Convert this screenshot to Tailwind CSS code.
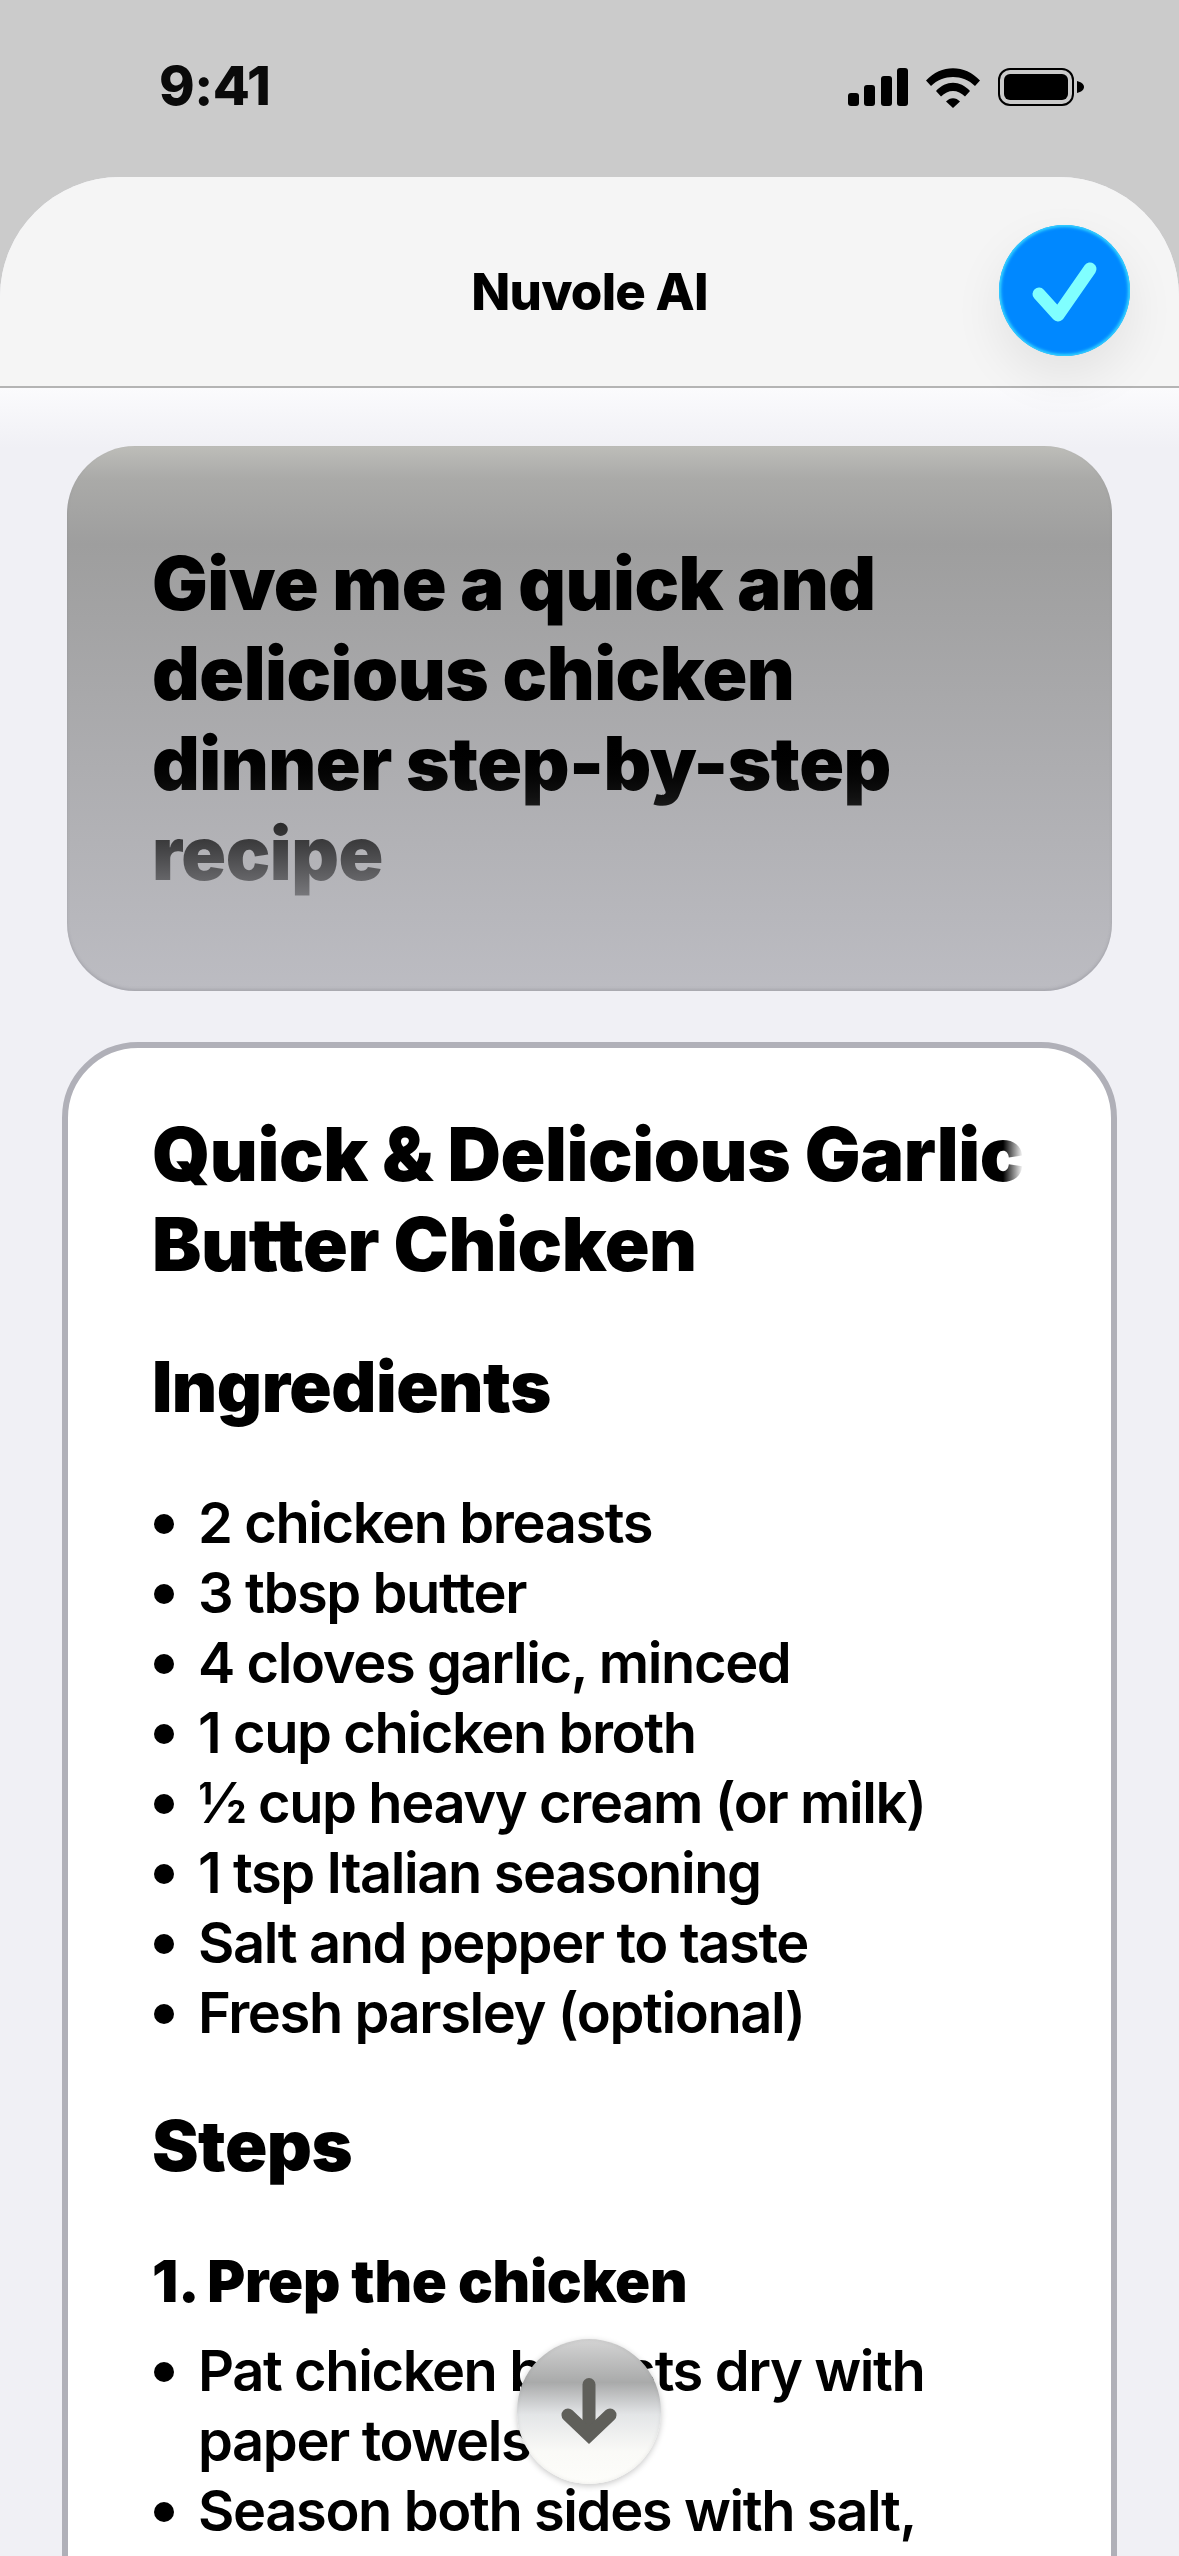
<!DOCTYPE html>
<html lang="en">
<head>
    <meta charset="UTF-8">
    <meta name="viewport" content="width=device-width, initial-scale=1.0">
    <title>Nuvole AI</title>
    <script src="https://cdn.jsdelivr.net/npm/@tailwindcss/browser@4"></script>
</head>
<body class="bg-[#cbcbcb] font-['Inter',sans-serif] text-black">
    <div class="relative w-[1179px] h-[2556px] overflow-hidden bg-[#cbcbcb]">
        <!-- status bar -->
        <div class="h-[177px] flex justify-between pl-[159px] pr-[95px] pt-[56px]">
            <span class="text-[54px] leading-[60px] font-extrabold tracking-[-0.5px] text-[#0a0a0a]">9:41</span>
            <div class="flex items-start gap-[18px] pt-[12px]">
                <svg class="w-[60px] h-[38px]" viewBox="0 0 60 38" fill="#000">
                    <rect x="0" y="25" width="11" height="13" rx="3"/>
                    <rect x="16" y="17" width="11" height="21" rx="3"/>
                    <rect x="33" y="8" width="11" height="30" rx="3"/>
                    <rect x="49" y="0" width="11" height="38" rx="3"/>
                </svg>
                <svg class="w-[54px] h-[40px]" viewBox="0 0 54 40" fill="#000">
                    <path d="M0 12.500C15 -4 39 -4 54 12.500L49 18C37 6 17 6 5 18Z"/>
                    <path d="M10 23C20 12 34 12 44 23L39 28.500C32 21 22 21 15 28.500Z"/>
                    <path d="M20 33.500C24 29 30 29 34 33.500L27 40Z"/>
                </svg>
                <svg class="w-[86px] h-[38px]" viewBox="0 0 86 38">
                    <rect x="1" y="1" width="74" height="36" rx="11" fill="none" stroke="#000" stroke-width="2"/>
                    <rect x="6" y="6" width="64" height="26" rx="6" fill="#000"/>
                    <path d="M79 13C83 14 86 16 86 19C86 22 83 24 79 25Z" fill="#000"/>
                </svg>
            </div>
        </div>

        <!-- sheet -->
        <div class="rounded-t-[120px] bg-[#f0f0f5] h-full overflow-hidden">
            <header class="relative h-[211px] flex items-center justify-center bg-[#f5f5f5] border-b-2 border-[#b4b4b4]">
                <h1 class="text-[51px] font-extrabold tracking-[-0.8px] leading-[60px] mt-[20px]">Nuvole AI</h1>
                <button class="absolute left-[999px] top-[48px] w-[131px] h-[131px] rounded-full bg-[#0088ff] flex items-center justify-center shadow-[0_20px_50px_rgba(0,0,0,0.08),inset_0_0_3px_2px_#35d6ff]">
                    <svg class="w-[131px] h-[131px]" viewBox="0 0 131 131" fill="none">
                        <path d="M40 69L59 90L91 44" stroke="#80ffff" stroke-width="13" stroke-linecap="round" stroke-linejoin="round"/>
                    </svg>
                </button>
            </header>

            <main class="bg-linear-to-b from-[#fbfbfd] to-[#f0f0f5] to-[60px] pt-[58px]">
                <!-- prompt bubble -->
                <section class="mx-[67px] h-[545px] rounded-[68px] pl-[85px] pt-[92px] bg-[linear-gradient(180deg,#bdbdb9_0%,#aaaaa8_6%,#9e9e9e_18%,#bcbcc2_100%)] shadow-[inset_0_-2px_3px_rgba(120,120,130,0.3)]">
                    <p class="w-[900px] text-[74px] leading-[90px] font-black tracking-[-0.5px] bg-linear-to-b from-black from-[55%] via-[#111] via-[72%] to-[#7a7a7e] bg-clip-text text-transparent">Give me a quick and<br>delicious chicken<br>dinner step-by-step<br>recipe</p>
                </section>

                <!-- response card -->
                <article class="relative mx-[62px] mt-[51px] h-[1600px] rounded-[76px] border-[6px] border-[#b0b0b8] bg-white pl-[84px] pt-[61px]">
                    <h2 class="w-[900px] text-[74px] leading-[90px] font-black tracking-[-0.4px]">Quick &amp; Delicious Garlic<br>Butter Chicken</h2>
                    <div class="absolute left-[935px] top-[60px] w-[40px] h-[90px] bg-linear-to-r from-white/0 to-white to-50%"></div>
                    <h3 class="mt-[58px] text-[70px] leading-[80px] font-black tracking-[-0.5px]">Ingredients</h3>
                    <ul class="mt-[61px] text-[56px] leading-[70px] font-semibold tracking-[-1.4px]">
                        <li class="flex"><span class="w-[20px] h-[20px] ml-[2px] mr-[24px] mt-[26px] shrink-0 rounded-full bg-black"></span>2 chicken breasts</li>
                        <li class="flex"><span class="w-[20px] h-[20px] ml-[2px] mr-[24px] mt-[26px] shrink-0 rounded-full bg-black"></span>3 tbsp butter</li>
                        <li class="flex"><span class="w-[20px] h-[20px] ml-[2px] mr-[24px] mt-[26px] shrink-0 rounded-full bg-black"></span>4 cloves garlic, minced</li>
                        <li class="flex"><span class="w-[20px] h-[20px] ml-[2px] mr-[24px] mt-[26px] shrink-0 rounded-full bg-black"></span>1 cup chicken broth</li>
                        <li class="flex"><span class="w-[20px] h-[20px] ml-[2px] mr-[24px] mt-[26px] shrink-0 rounded-full bg-black"></span>½ cup heavy cream (or milk)</li>
                        <li class="flex"><span class="w-[20px] h-[20px] ml-[2px] mr-[24px] mt-[26px] shrink-0 rounded-full bg-black"></span>1 tsp Italian seasoning</li>
                        <li class="flex"><span class="w-[20px] h-[20px] ml-[2px] mr-[24px] mt-[26px] shrink-0 rounded-full bg-black"></span>Salt and pepper to taste</li>
                        <li class="flex"><span class="w-[20px] h-[20px] ml-[2px] mr-[24px] mt-[26px] shrink-0 rounded-full bg-black"></span>Fresh parsley (optional)</li>
                    </ul>
                    <h3 class="mt-[58px] text-[70px] leading-[80px] font-black tracking-[-0.5px]">Steps</h3>
                    <h4 class="mt-[61px] text-[58px] leading-[68px] font-black tracking-[-0.3px]">1. Prep the chicken</h4>
                    <ul class="mt-[21px] text-[56px] leading-[70px] font-semibold tracking-[-1.4px]">
                        <li class="flex"><span class="w-[20px] h-[20px] ml-[2px] mr-[24px] mt-[26px] shrink-0 rounded-full bg-black"></span><div>Pat chicken breasts dry with<br>paper towels</div></li>
                        <li class="flex"><span class="w-[20px] h-[20px] ml-[2px] mr-[24px] mt-[26px] shrink-0 rounded-full bg-black"></span>Season both sides with salt,</li>
                    </ul>
                </article>
            </main>
        </div>

        <!-- scroll to bottom -->
        <button class="absolute left-[517px] top-[2339px] w-[144px] h-[145px] rounded-full flex items-center justify-center bg-[linear-gradient(180deg,#d4d4d4_0%,#a9aaaa_30%,#e3e5e7_52%,#fafaf7_78%,#fdfdfa_100%)] shadow-[0_2px_6px_rgba(0,0,0,0.22),inset_0_0_4px_rgba(0,0,0,0.08)]">
            <svg class="w-[60px] h-[68px]" viewBox="0 0 60 68" fill="none">
                <path d="M30 6.500V55" stroke="#5f5f5a" stroke-width="13" stroke-linecap="round"/>
                <path d="M9 37L30 57L51 37" stroke="#5f5f5a" stroke-width="13" stroke-linecap="round" stroke-linejoin="miter"/>
            </svg>
        </button>
    </div>
</body>
</html>
